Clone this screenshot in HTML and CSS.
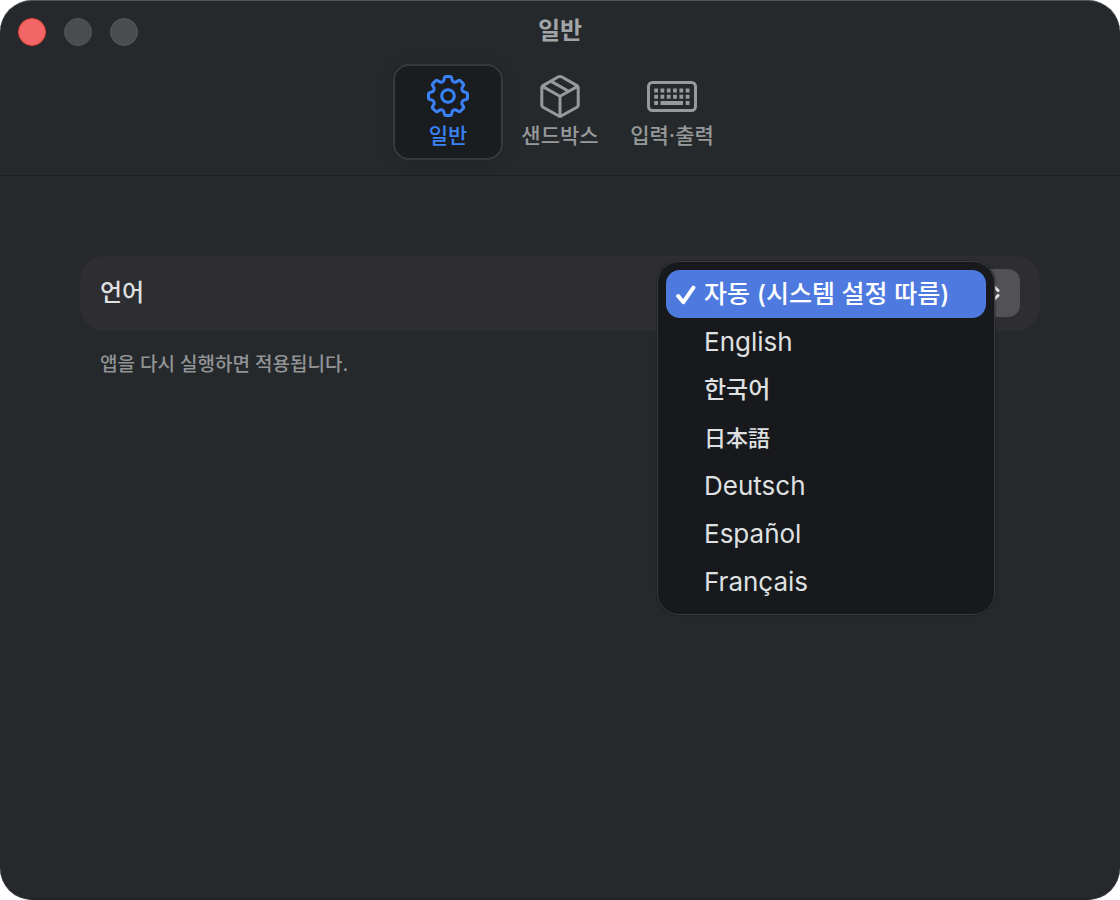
FILE: index.html
```html
<!DOCTYPE html>
<html lang="ko">
<head>
<meta charset="utf-8">
<meta name="viewport" content="width=device-width, initial-scale=1">
<title>일반</title>
<link rel="stylesheet" href="styles.css">
</head>
<body>
<div class="window">
  <header class="toolbar">
    <div class="titlebar">
      <div class="lights">
        <button class="light light-close" type="button" aria-label="닫기"></button>
        <button class="light" type="button" aria-label="최소화" disabled></button>
        <button class="light" type="button" aria-label="확대" disabled></button>
      </div>
      <h1 class="title">일반</h1>
    </div>
    <nav class="tabs">
      <button class="tab tab-active" type="button" aria-current="page">
        <svg class="icon" viewBox="-26 -22 52 44" aria-hidden="true">
          <defs><path id="tooth" d="M-5.8-14C-4.6-14.5-4-15.5-3.8-17L-3.6-18.2Q-3.4-19.5-2-19.5H2Q3.4-19.5 3.6-18.2L3.8-17C4-15.5 4.6-14.5 5.8-14"/></defs>
          <use href="#tooth"/><use href="#tooth" transform="rotate(45)"/><use href="#tooth" transform="rotate(90)"/><use href="#tooth" transform="rotate(135)"/><use href="#tooth" transform="rotate(180)"/><use href="#tooth" transform="rotate(225)"/><use href="#tooth" transform="rotate(270)"/><use href="#tooth" transform="rotate(315)"/>
          <circle r="6.3"/>
        </svg>
        <span>일반</span>
      </button>
      <button class="tab" type="button">
        <svg class="icon" viewBox="-26 -22 52 44" aria-hidden="true">
          <path d="M-1.6-19.2Q0-20 1.6-19.2L17-10.4Q18.2-9.7 18.2-8.2V9Q18.2 10.4 17 11.2L1.6 19.8Q0 20.6-1.6 19.8L-17 11.2Q-18.2 10.4-18.2 9V-8.2Q-18.2-9.7-17-10.4ZM-17.6-9.6L0 .2 17.6-9.6M0 .2V20M-8.8-14.6L8.6-4.8"/>
        </svg>
        <span>샌드박스</span>
      </button>
      <button class="tab" type="button">
        <svg class="icon" viewBox="-26 -22 52 44" aria-hidden="true">
          <rect x="-23.5" y="-13.5" width="47" height="28" rx="4"/>
          <path class="keys" d="M-17.8-5.5H18M-17.8 .7H18"/>
          <path class="space" d="M-17.8 6.9h3.8M-11.5 6.9h22.5M13.7 6.9h3.8"/>
        </svg>
        <span>입력·출력</span>
      </button>
    </nav>
  </header>
  <main class="content">
    <div class="row">
      <label class="row-label" for="language">언어</label>
      <div class="picker">
        <select class="select" id="language">
          <option>자동 (시스템 설정 따름)</option>
          <option>English</option>
          <option>한국어</option>
          <option>日本語</option>
          <option>Deutsch</option>
          <option>Español</option>
          <option>Français</option>
        </select>
        <svg class="chevrons" viewBox="0 0 14 20" aria-hidden="true"><path d="M2 7.5 7 2.5 12 7.5M2 12.5 7 17.5 12 12.5"/></svg>
        <div class="menu" role="listbox" aria-label="언어">
          <button class="item item-selected" type="button" role="option" aria-selected="true">
            <svg class="check" viewBox="0 0 20 20" aria-hidden="true"><path d="M2.2 11 7.4 17.2 17.4 2.6"/></svg>자동 (시스템 설정 따름)</button>
          <button class="item item-latin" type="button" role="option" lang="en">English</button>
          <button class="item" type="button" role="option">한국어</button>
          <button class="item item-ja" type="button" role="option" lang="ja">日本語</button>
          <button class="item item-latin" type="button" role="option" lang="de">Deutsch</button>
          <button class="item item-latin" type="button" role="option" lang="es">Español</button>
          <button class="item item-latin" type="button" role="option" lang="fr">Français</button>
        </div>
      </div>
    </div>
    <p class="hint">앱을 다시 실행하면 적용됩니다.</p>
  </main>
</div>
</body>
</html>
```
FILE: styles.css
```css
* {
  box-sizing: border-box;
}

body {
  margin: 0;
  background: #fff;
  color: #dfe0e1;
  font-family: Inter, "Noto Sans CJK KR", sans-serif;
  font-size: 24px;
}

button,
select {
  margin: 0;
  padding: 0;
  border: 0;
  font: inherit;
  color: inherit;
  background: none;
}

.window {
  min-height: 100vh;
  border-top: 1px solid #505659;
  border-bottom: 1px solid #241f27;
  border-radius: 32px;
  background: #25292c;
}

.toolbar {
  padding-bottom: 15px;
  border-bottom: 1px solid #1d2022;
}

.titlebar {
  display: grid;
  grid-template-columns: 1fr auto 1fr;
  align-items: center;
  height: 62px;
  padding: 0 18px;
}

.lights {
  display: flex;
  gap: 18px;
}

.light {
  width: 28px;
  height: 28px;
  border: 1px solid #54585a;
  border-radius: 50%;
  background: #494d4f;
}

.light-close {
  border-color: #e8423f;
  background: #ef6664;
}

.title {
  margin: 0;
  padding-bottom: 2px;
  color: #a2a5a7;
  font-size: 24px;
  font-weight: 700;
  line-height: 32px;
}

.tabs {
  display: flex;
  justify-content: center;
  gap: 2px;
  padding-top: 1px;
}

.tab {
  display: flex;
  flex-direction: column;
  align-items: center;
  gap: 4px;
  width: 110px;
  height: 96px;
  padding-top: 8px;
  border: 2px solid transparent;
  border-radius: 16px;
  color: #97999b;
  font-size: 21px;
  font-weight: 500;
  line-height: 28px;
}

.tab-active {
  border-color: #363a3d;
  background: #1a1d20;
  box-shadow: 0 2px 12px #1f222488;
  color: #3a82f7;
}

.icon {
  width: 52px;
  height: 44px;
  fill: none;
  stroke: currentColor;
  stroke-width: 3;
  stroke-linejoin: round;
}

.keys {
  stroke-width: 4;
  stroke-dasharray: 3.8 2.5;
}

.space {
  stroke-width: 4;
}

.content {
  padding: 80px;
}

.row {
  display: flex;
  align-items: center;
  justify-content: space-between;
  height: 75px;
  padding: 0 20px 2px;
  border-radius: 24px;
  background: #2e2e32;
}

.row-label {
  padding-bottom: 4px;
  font-weight: 500;
}

.picker {
  position: relative;
  width: 356px;
  height: 48px;
}

.select {
  width: 100%;
  height: 48px;
  padding-left: 16px;
  border-radius: 12px;
  background: #525256;
  appearance: none;
}

.chevrons {
  position: absolute;
  top: 14px;
  right: 20px;
  width: 14px;
  height: 20px;
  fill: none;
  stroke: #e5e5e5;
  stroke-width: 3;
  stroke-linecap: round;
}

.menu {
  position: absolute;
  top: -8px;
  right: 25px;
  width: 338px;
  padding: 8px;
  border: 1px solid #363c40;
  border-radius: 22px;
  background: #17191c;
  box-shadow: 0 0 2px #111315;
}

.item {
  position: relative;
  display: block;
  width: 100%;
  height: 48px;
  padding-left: 38px;
  border-radius: 14px;
  font-weight: 500;
  line-height: 48px;
  text-align: left;
}

.item-selected {
  background: #4e7ae0;
  color: #fff;
  font-size: 25px;
}

.item-latin {
  font-size: 26px;
  font-weight: 400;
}

.item-ja {
  font-family: Inter, "Noto Sans CJK JP", sans-serif;
  font-size: 22px;
}

.check {
  position: absolute;
  top: 15px;
  left: 10px;
  width: 20px;
  height: 20px;
  fill: none;
  stroke: currentColor;
  stroke-width: 4;
  stroke-linecap: round;
  stroke-linejoin: round;
}

.hint {
  margin: 18px 20px 0;
  color: #929496;
  font-size: 19px;
  font-weight: 500;
  line-height: 32px;
}
```
